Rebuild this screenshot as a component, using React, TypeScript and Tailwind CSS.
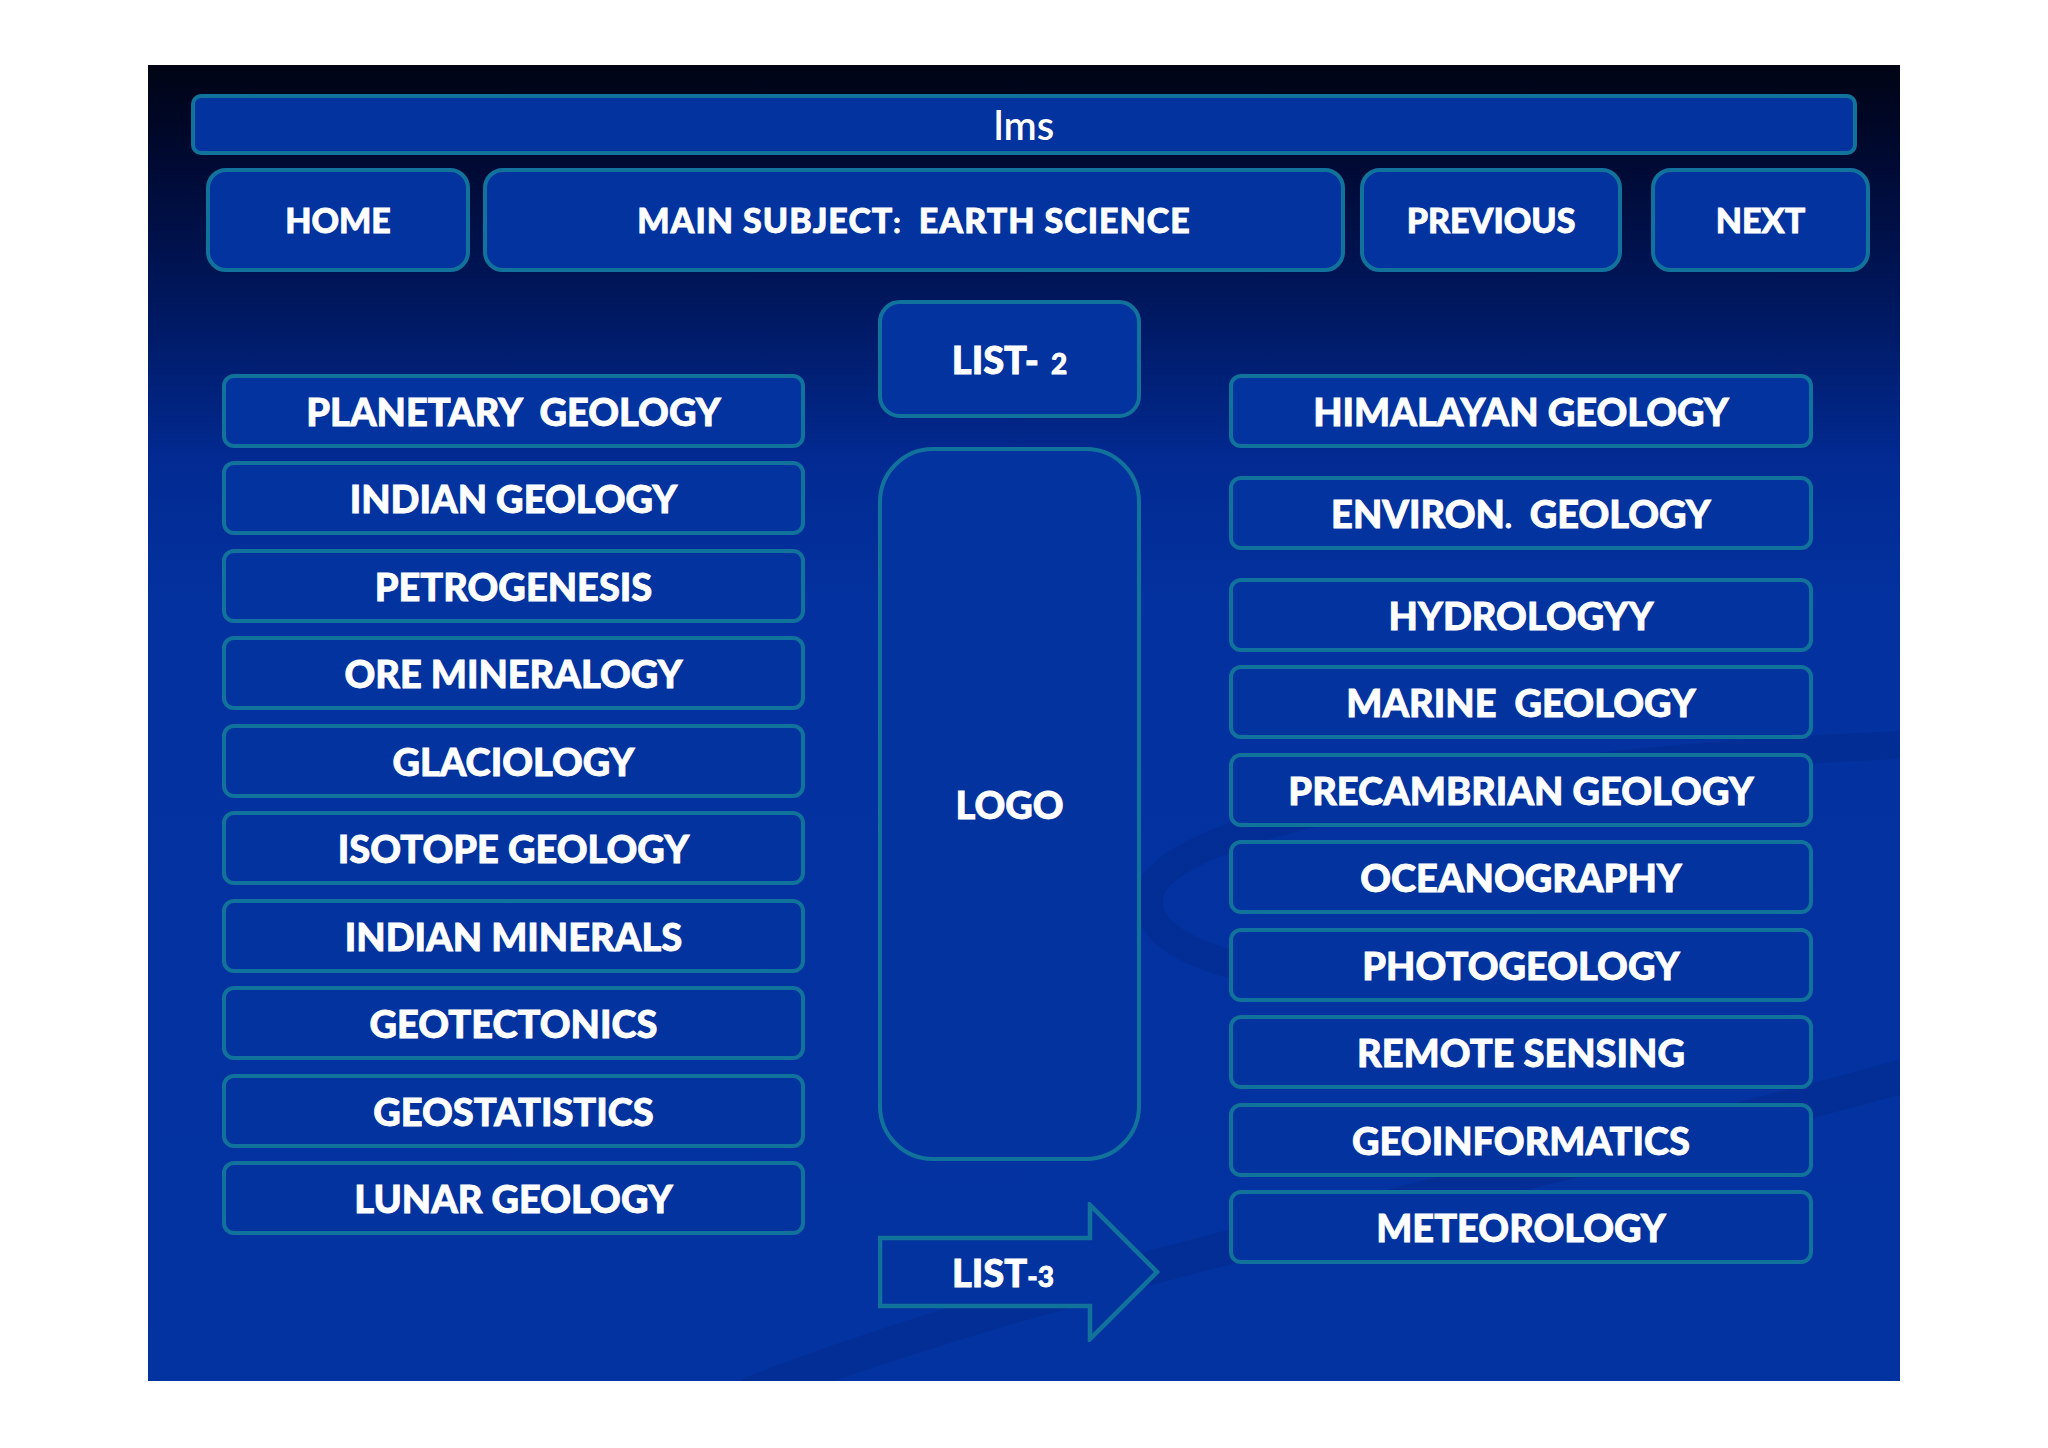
import React from "react";

const font = { fontFamily: "Lato, 'Open Sans', 'DejaVu Sans', sans-serif" };

function Box({ children, className }: { children: React.ReactNode; className: string }) {
  return (
    <div
      className={
        "flex items-center justify-center border-[4px] border-[#11739b] bg-[#02339e] text-white font-black " +
        className
      }
    >
      <span className="whitespace-nowrap [-webkit-text-stroke:0.8px_white]">{children}</span>
    </div>
  );
}

const left = [
  "PLANETARY\u00a0\u00a0GEOLOGY",
  "INDIAN GEOLOGY",
  "PETROGENESIS",
  "ORE MINERALOGY",
  "GLACIOLOGY",
  "ISOTOPE GEOLOGY",
  "INDIAN MINERALS",
  "GEOTECTONICS",
  "GEOSTATISTICS",
  "LUNAR GEOLOGY",
];

const right = [
  "MARINE\u00a0\u00a0GEOLOGY",
  "PRECAMBRIAN GEOLOGY",
  "OCEANOGRAPHY",
  "PHOTOGEOLOGY",
  "REMOTE SENSING",
  "GEOINFORMATICS",
  "METEOROLOGY",
];

export default function App() {
  return (
    <div className="w-[2048px] h-[1448px] bg-white pt-[65px] pl-[148px]" style={font}>
      <div className="relative w-[1752px] h-[1316px] overflow-hidden bg-[linear-gradient(180deg,#000414_0%,#000a35_8%,#001a66_20%,#022a92_30%,#0332a0_42%,#0333a0_100%)]">
        <svg
          className="absolute inset-0 pointer-events-none"
          width="1752"
          height="1316"
          viewBox="0 0 1752 1316"
        >
          <path
            d="M 1752 680 C 1400 695, 1060 745, 1006 818 C 985 858, 1030 888, 1100 903"
            fill="none"
            stroke="#01267f"
            strokeWidth="28"
            opacity="0.3"
          />
          <path
            d="M 600 1330 C 900 1210, 1400 1110, 1760 1010"
            fill="none"
            stroke="#01267f"
            strokeWidth="34"
            opacity="0.3"
          />
        </svg>

        <div className="relative flex flex-col">
          {/* Title bar */}
          <div className="ml-[43px] mt-[29px] w-[1666px] h-[61px] flex items-center justify-center rounded-[10px] border-[4px] border-[#11739b] bg-[#02339e] text-white text-[40px] font-semibold leading-none">
            lms
          </div>

          {/* Nav row */}
          <div className="mt-[13px] flex h-[104px] text-[34px] leading-none">
            <Box className="ml-[58px] w-[264px] rounded-[20px]">HOME</Box>
            <Box className="ml-[13px] w-[862px] rounded-[20px]">
              <span className="tracking-[1px]">MAIN SUBJECT</span>
              <span className="text-[28px]">:</span>
              <span className="tracking-[1px]">&nbsp;&nbsp;EARTH SCIENCE</span>
            </Box>
            <Box className="ml-[15px] w-[262px] rounded-[20px]">PREVIOUS</Box>
            <Box className="ml-[29px] w-[219px] rounded-[20px]">NEXT</Box>
          </div>

          {/* Body */}
          <div className="mt-[28px] flex items-start text-[38px] leading-none">
            <div className="ml-[74px] mt-[73.5px] w-[583px] flex flex-col gap-[13.5px]">
              {left.map((t) => (
                <Box key={t} className="h-[74px] rounded-[12px]">
                  {t}
                </Box>
              ))}
            </div>

            <div className="ml-[73px] w-[263px] flex flex-col">
              <Box className="h-[118px] rounded-[22px]">
                LIST-<span className="text-[28px] ml-[12px]">2</span>
              </Box>
              <Box className="mt-[29px] h-[714px] rounded-[55px]">LOGO</Box>
              <div className="relative mt-[41px] w-[282px] h-[140px]">
                <svg
                  className="absolute inset-0"
                  width="282"
                  height="140"
                  viewBox="0 0 282 140"
                >
                  <polygon
                    points="2,36 212,36 212,3 279,70 212,137 212,104 2,104"
                    fill="#02339e"
                    stroke="#11739b"
                    strokeWidth="4.5"
                  />
                </svg>
                <div className="relative flex h-full items-center pl-[74px] text-white font-black">
                  <span className="whitespace-nowrap [-webkit-text-stroke:0.8px_white]">
                    LIST<span className="text-[28px]">-3</span>
                  </span>
                </div>
              </div>
            </div>

            <div className="ml-[88px] mt-[73.5px] w-[584px] flex flex-col">
              <Box className="h-[74px] rounded-[12px]">HIMALAYAN GEOLOGY</Box>
              <Box className="mt-[28px] h-[74px] rounded-[12px]">
                ENVIRON<span className="text-[28px]">.</span>&nbsp;&nbsp;GEOLOGY
              </Box>
              <Box className="mt-[28px] h-[74px] rounded-[12px]">HYDROLOGYY</Box>
              <div className="mt-[13.5px] flex flex-col gap-[13.5px]">
                {right.map((t) => (
                  <Box key={t} className="h-[74px] rounded-[12px]">
                    {t}
                  </Box>
                ))}
              </div>
            </div>
          </div>
        </div>
      </div>
    </div>
  );
}
